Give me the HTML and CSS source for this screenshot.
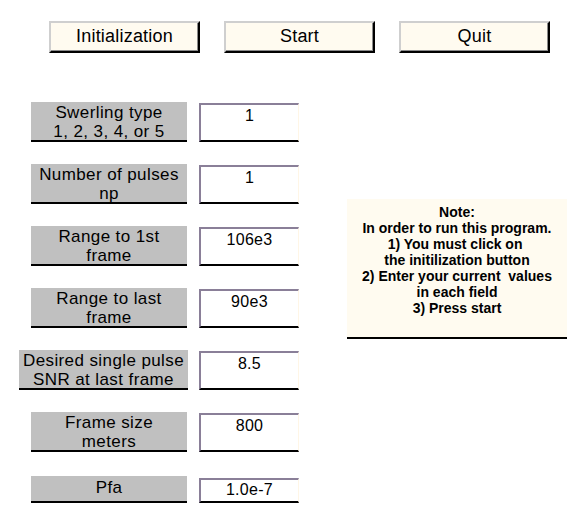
FILE: index.html
```html
<!DOCTYPE html>
<html>
<head>
<meta charset="utf-8">
<link rel="stylesheet" href="styles.css">
</head>
<body>
<div class="app">
  <div class="toolbar">
    <div class="btn">Initialization</div>
    <div class="btn">Start</div>
    <div class="btn">Quit</div>
  </div>
  <div class="main">
    <div class="form">
      <div class="row">
        <div class="label">Swerling type<br>1, 2, 3, 4, or 5</div>
        <div class="field">1</div>
      </div>
      <div class="row">
        <div class="label">Number of pulses<br>np</div>
        <div class="field">1</div>
      </div>
      <div class="row">
        <div class="label">Range to 1st<br>frame</div>
        <div class="field">106e3</div>
      </div>
      <div class="row">
        <div class="label">Range to last<br>frame</div>
        <div class="field">90e3</div>
      </div>
      <div class="row">
        <div class="label label-wide">Desired single pulse<br>SNR at last frame</div>
        <div class="field">8.5</div>
      </div>
      <div class="row">
        <div class="label">Frame size<br>meters</div>
        <div class="field">800</div>
      </div>
      <div class="row row-short">
        <div class="label label-short">Pfa</div>
        <div class="field field-short">1.0e-7</div>
      </div>
    </div>
    <div class="note">Note:<br>In order to run this program.<br>1) You must click on&nbsp;<br>the initilization button<br>2) Enter your current&nbsp; values<br>in each field<br>3) Press start</div>
  </div>
</div>
</body>
</html>
```

FILE: styles.css
```css
html, body {
  margin: 0;
  padding: 0;
  background: #ffffff;
}

.app {
  font-family: "Liberation Sans", Arial, sans-serif;
  color: #000;
  width: 580px;
  height: 532px;
}

.toolbar {
  display: flex;
  gap: 24px;
  padding: 21px 0 0 49px;
}

.btn {
  box-sizing: border-box;
  width: 151px;
  height: 32px;
  background: #fffbf0;
  border-top: 2px solid #cfcfcf;
  border-left: 2px solid #cfcfcf;
  border-right: 2px solid #000;
  border-bottom: 2px solid #000;
  box-shadow: inset -1px -1px 0 #8a8a8a;
  font-size: 18px;
  line-height: 27px;
  text-align: center;
  letter-spacing: 0.2px;
}

.main {
  display: flex;
  align-items: flex-start;
  margin-top: 49px;
}

.form {
  display: flex;
  flex-direction: column;
  padding-left: 19px;
}

.row {
  display: flex;
  align-items: flex-start;
}

.row + .row {
  margin-top: 22px;
}

.row.row-short {
  margin-top: 24px;
}

.label {
  box-sizing: border-box;
  width: 156px;
  height: 40px;
  margin-left: 12px;
  margin-right: 12px;
  padding-top: 1px;
  background: #c0c0c0;
  border-bottom: 2px solid #000;
  font-size: 17px;
  line-height: 19px;
  letter-spacing: 0.4px;
  text-align: center;
  white-space: nowrap;
}

.label-wide {
  width: 169px;
  margin-left: 0;
  margin-right: 11px;
}

.label-short {
  height: 27px;
  padding-top: 2px;
}

.field {
  box-sizing: border-box;
  width: 100px;
  height: 39px;
  margin-top: 1px;
  padding-top: 1px;
  background: #ffffff;
  border-top: 2px solid #8a7f98;
  border-left: 2px solid #8a7f98;
  border-right: 1px solid #fff6e6;
  border-bottom: 2px solid #000;
  font-size: 16px;
  line-height: 19px;
  letter-spacing: 0.3px;
  text-align: center;
}

.field-short {
  height: 25px;
  margin-top: 2px;
  padding-top: 0;
}

.note {
  box-sizing: border-box;
  width: 220px;
  height: 140px;
  margin-left: 48px;
  margin-top: 97px;
  padding-top: 5px;
  background: #fffbf0;
  border-bottom: 2px solid #000;
  font-size: 14px;
  font-weight: bold;
  line-height: 16px;
  text-align: center;
  white-space: nowrap;
}
```
